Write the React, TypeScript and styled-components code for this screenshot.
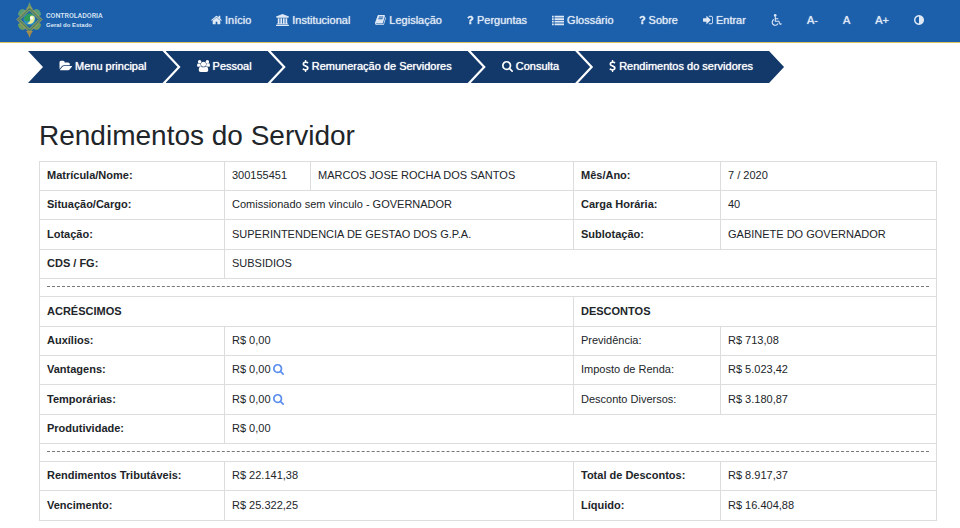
import React from "react";
import styled, { createGlobalStyle } from "styled-components";

const GlobalStyle = createGlobalStyle`
  * { box-sizing: border-box; }
  body {
    margin: 0;
    background: #fff;
    color: #212529;
    font-family: "Liberation Sans", Arial, sans-serif;
    font-size: 11px;
    line-height: 16px;
  }
`;

const glyphs = {
  home: {
    width: 1664,
    left: 64,
    d: "M1472 992v480q0 26-19 45t-45 19h-384v-384h-256v384h-384q-26 0-45-19t-19-45v-480q0-1 .5-3t.5-3l575-474 575 474q1 2 1 6zm223-69l-62 74q-8 9-21 11h-3q-13 0-21-7l-692-577-692 577q-12 8-24 7-13-2-21-11l-62-74q-8-10-7-23.5t11-21.5l719-599q32-26 76-26t76 26l244 204v-195q0-14 9-23t23-9h192q14 0 23 9t9 23v408l219 182q10 8 11 21.5t-7 23.5z",
  },
  university: {
    width: 1920,
    left: 0,
    d: "M960 0l960 384v128h-128q0 26-20.5 45t-48.5 19h-1526q-28 0-48.5-19t-20.5-45h-128v-128zM256 640h256v768h128v-768h256v768h128v-768h256v768h128v-768h256v768h59q28 0 48.5 19t20.5 45v64h-1664v-64q0-26 20.5-45t48.5-19h59zM1851 1600q28 0 48.5 19t20.5 45v128h-1920v-128q0-26 20.5-45t48.5-19z",
  },
  book: {
    width: 1664,
    left: 64,
    d: "M1703 478q40 57 18 129l-275 906q-19 64-76.5 107.5t-122.5 43.5h-923q-77 0-148.5-53.5t-99.5-131.5q-24-67-2-127 0-4 3-27t4-37q1-8-3-21.5t-3-19.500q2-11 8-21t16.500-23.500 16.500-23.500q23-38 45-91.500t30-91.500q3-10 .5-30t-.5-28q3-11 17-28t17-23q21-36 42-92t25-90q1-9-2.500-32t.5-28q4-13 22-30.500t22-22.500q19-26 42.500-84.500t27.500-96.500q1-8-3-25.500t-2-26.500q2-8 9-18t18-23 17-21q8-12 16.500-30.500t15-35 16-36 19.500-32 26.500-23.500 36-11.500 47.500 5.500l-1 3q38-9 51-9h761q74 0 114 56t18 130l-274 906q-36 119-71.500 153.500t-128.500 34.500h-869q-27 0-38 15-11 16-1 43 24 70 144 70h923q29 0 56-15.500t35-41.500l300-987q7-22 5-57 38 15 59 43zm-1064 2q-4 13 2 22.500t20 9.500h608q13 0 25.500-9.500t16.500-22.500l21-64q4-13-2-22.500t-20-9.500h-608q-13 0-25.500 9.500t-16.500 22.500zm-83 256q-4 13 2 22.500t20 9.500h608q13 0 25.500-9.500t16.500-22.500l21-64q4-13-2-22.500t-20-9.500h-608q-13 0-25.500 9.500t-16.500 22.500z",
  },
  question: {
    width: 1024,
    left: 384,
    d: "M1024 1248v240q0 16-12 28t-28 12h-240q-16 0-28-12t-12-28v-240q0-16 12-28t28-12h240q16 0 28 12t12 28zm316-600q0 54-15.5 101t-35 76.5-55 59.5-57.5 43.5-61 35.5q-41 23-68.5 65t-27.5 67q0 17-12 32.5t-28 15.5h-240q-15 0-25.5-18.5t-10.5-37.5v-45q0-83 65-156.5t143-108.5q59-27 84-56t25-76q0-42-46.5-74t-107.5-32q-65 0-108 29-35 25-107 115-13 16-31 16-12 0-25-8l-164-125q-13-10-15.5-25t5.5-28q160-266 464-266 80 0 161 31t146 83 106 127.5 41 158.5z",
  },
  list: {
    width: 1792,
    left: 0,
    d: "M0 256h256v256H0zM384 256h1408v256H384zM0 640h256v256H0zM384 640h1408v256H384zM0 1024h256v256H0zM384 1024h1408v256H384zM0 1408h256v256H0zM384 1408h1408v256H384z",
  },
  signIn: {
    width: 1536,
    left: 128,
    d: "M1312 896q0 26-19 45l-544 544q-19 19-45 19t-45-19-19-45v-288h-448q-26 0-45-19t-19-45v-384q0-26 19-45t45-19h448v-288q0-26 19-45t45-19 45 19l544 544q19 19 19 45zm352-352v704q0 119-84.5 203.5t-203.5 84.5h-320q-13 0-22.5-9.5t-9.5-22.5q-1-4-1-20t-.5-26.500 3-23.500 10-19.500 20.500-6.500h320q66 0 113-47t47-113v-704q0-66-47-113t-113-47h-312l-11.500-1-11.500-3-8-5.500-7-9-2-13.500q-1-4-1-20t-.5-26.500 3-23.500 10-19.500 20.500-6.500h320q119 0 203.500 84.500t84.500 203.500z",
  },
  adjust: {
    width: 1536,
    left: 128,
    d: "M896 1440v-1088q-148 0-273 73t-198 198-73 273 73 273 198 198 273 73zm768-544q0 209-103 385.5t-279.5 279.5-385.5 103-385.5-103-279.5-279.5-103-385.5 103-385.5 279.5-279.5 385.5-103 385.5 103 279.5 279.5 103 385.5z",
  },
  folderOpen: {
    width: 1920,
    left: 0,
    d: "M1943 952q0 31-31 66l-336 396q-43 51-120.5 86.5t-143.500 35.500h-1088q-34 0-60.500-13t-26.500-43q0-31 31-66l336-396q43-51 120.500-86.500t143.500-35.500h1088q34 0 60.500 13t26.500 43zm-343-344v160h-832q-94 0-197 47.500t-164 119.500l-337 396-5 6q0-4-.5-12.500t-.5-12.500v-960q0-92 66-158t158-66h320q92 0 158 66t66 158v32h544q92 0 158 66t66 158z",
  },
  users: {
    width: 1920,
    left: 0,
    d: "M593 896q-162 5-265 128h-134q-82 0-138-40.5t-56-118.5q0-353 124-353 6 0 43.500 21t97.500 42.500 119 21.500q67 0 133-23-5 37-5 66 0 159 81 292zm1071 637q0 120-73 189.500t-194 69.500h-874q-121 0-194-69.500t-73-189.500q0-53 3.500-103.500t14-109 26.500-108.500 43-97.500 62-81 85.500-53.500 111.500-20q10 0 43 21.500t73 48 107 48 135 21.500 135-21.500 107-48 73-48 43-21.500q61 0 111.500 20t85.500 53.500 62 81 43 97.500 26.500 108.500 14 109 3.500 103.500zm-1024-1277q0 106-75 181t-181 75-181-75-75-181 75-181 181-75 181 75 75 181zm704 384q0 159-112.500 271.500t-271.500 112.500-271.500-112.500-112.500-271.500 112.500-271.500 271.500-112.500 271.500 112.500 112.500 271.500zm576 225q0 78-56 118.500t-138 40.500h-134q-103-123-265-128 81-133 81-292 0-29-5-66 66 23 133 23 59 0 119-21.500t97.500-42.500 43.500-21q124 0 124 353zm-128-609q0 106-75 181t-181 75-181-75-75-181 75-181 181-75 181 75 75 181z",
  },
  dollar: {
    width: 1024,
    left: 384,
    d: "M1362 1185q0 153-99.500 263.500t-258.500 136.500v175q0 14-9 23t-23 9h-135q-13 0-22.500-9.500t-9.500-22.500v-175q-66-9-127.500-31t-101.500-44.500-74-48-46.500-37.500-17.500-18q-17-21-2-41l103-135q7-10 23-12 15-2 24 9l2 2q113 99 243 125 37 8 74 8 81 0 142.500-43t61.500-122q0-28-15-53t-33.500-42-58.500-37.500-66-32-80-32.500q-39-16-61.500-25t-61.500-26.500-62.500-31-56.500-35.500-53.500-42.500-43.500-49-35.500-58-21-66.500-8.500-78q0-138 98-242t255-134v-180q0-13 9.500-22.500t22.500-9.500h135q14 0 23 9t9 23v176q57 6 110.500 23t87 33.500 63.500 37.500 39 29 15 14q17 18 5 38l-81 146q-8 15-23 16-14 3-27-7-3-3-14.500-12t-39-26.500-58.500-32-74.500-26-85.500-11.500q-95 0-155 43t-60 111q0 26 8.500 48t29.500 41.500 39.500 33 56 31 60.500 27 70 27.500q53 20 81 31.500t76 35 75.500 42.500 62 50 53 63.500 31.500 76.500 13 94z",
  },
  search: {
    width: 1664,
    left: 64,
    d: "M1216 832q0-185-131.5-316.5t-316.5-131.5-316.5 131.5-131.5 316.5 131.5 316.5 316.5 131.5 316.5-131.5 131.5-316.5zm512 832q0 52-38 90t-90 38q-54 0-90-38l-343-342q-179 124-399 124-143 0-273.5-55.5t-225-150-150-225-55.5-273.5 55.5-273.5 150-225 225-150 273.5-55.5 273.5 55.5 225 150 150 225 55.5 273.5q0 220-124 399l343 343q37 37 37 90z",
  },
};

type GlyphName = keyof typeof glyphs;

const GlyphSvg = styled.svg`
  display: block;
  flex: none;
  height: 12px;
  fill: currentColor;
`;

function Glyph({ name }: { name: GlyphName }) {
  const { width, left, d } = glyphs[name];
  return (
    <GlyphSvg viewBox={`${left} 0 ${width} 1792`} width={Math.round((width / 1792) * 12)} aria-hidden="true">
      <path d={d} />
    </GlyphSvg>
  );
}

function Wheelchair() {
  return (
    <GlyphSvg viewBox="0 0 11 12" width="11" aria-hidden="true">
      <circle cx="4.200" cy="1.400" r="1.300" />
      <path
        d="M4.300 2.500V7.200H7.800L9.200 10.400L10.700 9.800M4.300 4.800H7.300M2.900 5.600A3 3 0 1 0 7 9.400"
        fill="none"
        stroke="currentColor"
        strokeWidth="1.100"
      />
    </GlyphSvg>
  );
}

const Header = styled.header`
  display: flex;
  align-items: center;
  justify-content: space-between;
  height: 43px;
  padding: 0 36px 2px 16px;
  background: #1c5fab;
  border-bottom: 1px solid #d9c55c;
`;

const Brand = styled.a`
  display: flex;
  align-items: center;
  gap: 3px;
  color: #dce8f6;
  text-decoration: none;
`;

const BrandText = styled.span`
  display: flex;
  flex-direction: column;
`;

const BrandName = styled.span`
  font-family: Roboto, "Liberation Sans", sans-serif;
  font-size: 7px;
  font-weight: 500;
  line-height: 10px;
`;

const BrandSub = styled.span`
  font-size: 6px;
  font-weight: 700;
  line-height: 8px;
`;

function Emblem() {
  return (
    <svg width="27" height="36" viewBox="0 0 27 36" aria-hidden="true">
      <path d="M13.500 0l1.500 4 2 3h-7l2-3z" fill="#6f9a68" />
      <path d="M13.500 36l-1.500-4-2-3h7l-2 3z" fill="#a08a50" />
      <path d="M7 7l4 2-5 6-4-2c0-3 2-6 5-6z" fill="#5b9c78" />
      <path d="M20 7l-4 2 5 6 4-2c0-3-2-6-5-6z" fill="#5b9c78" />
      <path d="M7 28l4-2-5-6-4 2c0 3 2 6 5 6z" fill="#6d9a63" />
      <path d="M20 28l-4-2 5-6 4 2c0 3-2 6-5 6z" fill="#6d9a63" />
      <path d="M13.500 5L26 17.500 13.500 30 1 17.500z" fill="#4c7d62" stroke="#b3a35c" />
      <path d="M13.500 8L23 17.500 13.500 27 4 17.500z" fill="#28659c" stroke="#8fae62" />
      <circle cx="13.500" cy="17.500" r="6" fill="#2e8fc4" />
      <path d="M8 17c1-5 8-7 10-3-3-1-4 1-4 4-1 2-5 2-6-1z" fill="#2f9c5a" />
      <path d="M14 14c4-2 6 2 4 5-1 3-5 4-7 2 3 0 4-4 3-7z" fill="#e6ee9a" />
      <circle cx="15.500" cy="16" r="1.500" fill="#fff" />
    </svg>
  );
}

const Nav = styled.nav`
  display: flex;
  align-items: center;
  gap: 25px;
  text-shadow: 0 0 1px currentColor;
`;

const NavLink = styled.a`
  display: flex;
  align-items: center;
  gap: 3px;
  color: #dfe9f5;
  text-decoration: none;
`;

const NavButton = styled.button`
  display: flex;
  align-items: center;
  padding: 0;
  border: 0;
  background: none;
  color: #dfe9f5;
  font: inherit;
  text-shadow: inherit;
  cursor: pointer;
`;

const Trail = styled.nav`
  padding: 8px 28px 0;
`;

const TrailList = styled.ol`
  display: flex;
  margin: 0;
  padding: 0;
  list-style: none;
`;

const TrailItem = styled.li`
  & + & {
    margin-left: -12px;
  }
`;

const TrailLink = styled.a`
  display: flex;
  align-items: center;
  gap: 3px;
  height: 32px;
  padding: 0 31px 2px;
  background: #12396a;
  clip-path: polygon(0 0, calc(100% - 15px) 0, 100% 50%, calc(100% - 15px) 100%, 0 100%, 15px 50%);
  color: #fff;
  text-decoration: none;
  text-shadow: 0 0 1px currentColor;
`;

const Main = styled.main`
  padding: 36px 23px 8px 39px;
`;

const Title = styled.h1`
  margin: 0 0 8px;
  font-size: 28px;
  font-weight: 400;
  line-height: 34px;
`;

const Table = styled.table`
  width: 100%;
  border-collapse: collapse;
  table-layout: fixed;
`;

const Col = styled.col<{ $width?: number }>`
  width: ${({ $width }) => ($width ? `${$width}px` : "auto")};
`;

const Row = styled.tr<{ $tall?: boolean }>`
  height: ${({ $tall }) => ($tall ? 30 : 29)}px;
`;

const cell = `
  padding: 0 7px 2px;
  border: 1px solid #dcdddf;
  text-align: left;
  vertical-align: middle;
`;

const Label = styled.th<{ $plain?: boolean }>`
  ${cell}
  font-weight: ${({ $plain }) => ($plain ? 400 : 700)};
`;

const Value = styled.td`
  ${cell}
`;

const Amount = styled.span`
  display: flex;
  align-items: center;
  gap: 2px;
`;

const DetailButton = styled(NavButton)`
  color: #5b8def;
`;

const DividerRow = styled.tr`
  height: 18px;
`;

const Dashes = styled.hr`
  margin: 0;
  border: 0;
  border-top: 1px dashed #777;
`;

const navLinks: { icon: GlyphName; text: string }[] = [
  { icon: "home", text: "Início" },
  { icon: "university", text: "Institucional" },
  { icon: "book", text: "Legislação" },
  { icon: "question", text: "Perguntas" },
  { icon: "list", text: "Glossário" },
  { icon: "question", text: "Sobre" },
  { icon: "signIn", text: "Entrar" },
];

const trail: { icon: GlyphName; text: string }[] = [
  { icon: "folderOpen", text: "Menu principal" },
  { icon: "users", text: "Pessoal" },
  { icon: "dollar", text: "Remuneração de Servidores" },
  { icon: "search", text: "Consulta" },
  { icon: "dollar", text: "Rendimentos do servidores" },
];

function Divider() {
  return (
    <DividerRow>
      <Value colSpan={5}>
        <Dashes />
      </Value>
    </DividerRow>
  );
}

function Detail({ amount, label }: { amount: string; label: string }) {
  return (
    <Amount>
      {amount}
      <DetailButton type="button" aria-label={label}>
        <Glyph name="search" />
      </DetailButton>
    </Amount>
  );
}

export default function App() {
  return (
    <>
      <GlobalStyle />
      <Header>
        <Brand href="#">
          <Emblem />
          <BrandText>
            <BrandName>CONTROLADORIA</BrandName>
            <BrandSub>Geral do Estado</BrandSub>
          </BrandText>
        </Brand>
        <Nav aria-label="Principal">
          {navLinks.map(({ icon, text }) => (
            <NavLink href="#" key={text}>
              <Glyph name={icon} />
              {text}
            </NavLink>
          ))}
          <NavButton type="button" aria-label="Acessibilidade">
            <Wheelchair />
          </NavButton>
          <NavButton type="button">A-</NavButton>
          <NavButton type="button">A</NavButton>
          <NavButton type="button">A+</NavButton>
          <NavButton type="button" aria-label="Contraste">
            <Glyph name="adjust" />
          </NavButton>
        </Nav>
      </Header>
      <Trail aria-label="Trilha">
        <TrailList>
          {trail.map(({ icon, text }) => (
            <TrailItem key={text}>
              <TrailLink href="#">
                <Glyph name={icon} />
                {text}
              </TrailLink>
            </TrailItem>
          ))}
        </TrailList>
      </Trail>
      <Main>
        <Title>Rendimentos do Servidor</Title>
        <Table>
          <colgroup>
            <Col $width={185} />
            <Col $width={86} />
            <Col />
            <Col $width={147} />
            <Col $width={216} />
          </colgroup>
          <tbody>
            <Row>
              <Label scope="row">Matrícula/Nome:</Label>
              <Value>300155451</Value>
              <Value>MARCOS JOSE ROCHA DOS SANTOS</Value>
              <Label scope="row">Mês/Ano:</Label>
              <Value>7 / 2020</Value>
            </Row>
            <Row>
              <Label scope="row">Situação/Cargo:</Label>
              <Value colSpan={2}>Comissionado sem vinculo - GOVERNADOR</Value>
              <Label scope="row">Carga Horária:</Label>
              <Value>40</Value>
            </Row>
            <Row $tall>
              <Label scope="row">Lotação:</Label>
              <Value colSpan={2}>SUPERINTENDENCIA DE GESTAO DOS G.P.A.</Value>
              <Label scope="row">Sublotação:</Label>
              <Value>GABINETE DO GOVERNADOR</Value>
            </Row>
            <Row>
              <Label scope="row">CDS / FG:</Label>
              <Value colSpan={4}>SUBSIDIOS</Value>
            </Row>
            <Divider />
            <Row $tall>
              <Label scope="colgroup" colSpan={3}>ACRÉSCIMOS</Label>
              <Label scope="colgroup" colSpan={2}>DESCONTOS</Label>
            </Row>
            <Row>
              <Label scope="row">Auxílios:</Label>
              <Value colSpan={2}>R$ 0,00</Value>
              <Label scope="row" $plain>Previdência:</Label>
              <Value>R$ 713,08</Value>
            </Row>
            <Row>
              <Label scope="row">Vantagens:</Label>
              <Value colSpan={2}><Detail amount="R$ 0,00" label="Detalhar vantagens" /></Value>
              <Label scope="row" $plain>Imposto de Renda:</Label>
              <Value>R$ 5.023,42</Value>
            </Row>
            <Row $tall>
              <Label scope="row">Temporárias:</Label>
              <Value colSpan={2}><Detail amount="R$ 0,00" label="Detalhar temporárias" /></Value>
              <Label scope="row" $plain>Desconto Diversos:</Label>
              <Value>R$ 3.180,87</Value>
            </Row>
            <Row>
              <Label scope="row">Produtividade:</Label>
              <Value colSpan={4}>R$ 0,00</Value>
            </Row>
            <Divider />
            <Row>
              <Label scope="row">Rendimentos Tributáveis:</Label>
              <Value colSpan={2}>R$ 22.141,38</Value>
              <Label scope="row">Total de Descontos:</Label>
              <Value>R$ 8.917,37</Value>
            </Row>
            <Row $tall>
              <Label scope="row">Vencimento:</Label>
              <Value colSpan={2}>R$ 25.322,25</Value>
              <Label scope="row">Líquido:</Label>
              <Value>R$ 16.404,88</Value>
            </Row>
          </tbody>
        </Table>
      </Main>
    </>
  );
}
